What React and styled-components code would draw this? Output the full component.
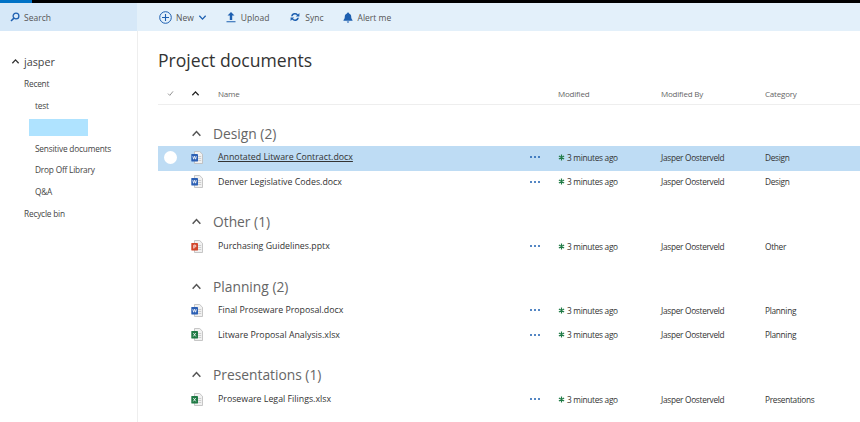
import React from 'react';
import styled, { createGlobalStyle } from 'styled-components';

const Global = createGlobalStyle`
  html, body { margin: 0; padding: 0; background: #fff; overflow: hidden; }
  body { font-family: 'Open Sans', 'Noto Sans', sans-serif; color: #333; }
  * { box-sizing: border-box; }
`;

const Page = styled.div`
  width: 860px;
  height: 422px;
  overflow: hidden;
  display: flex;
  flex-direction: column;
`;

const Suite = styled.div`
  height: 3px;
  background: #000;
  flex: none;
  &::before { content: ''; display: block; width: 32px; height: 3px; background: #0072c6; }
`;

const TopRow = styled.div`
  height: 28px;
  flex: none;
  display: flex;
  background: #e3f0fa;
`;

const SearchBox = styled.div`
  width: 137px;
  background: #d6e8f8;
  display: flex;
  align-items: center;
  gap: 4px;
  padding-left: 10px;
  font-size: 8.5px;
  color: #555;
`;

const Commands = styled.div`
  display: flex;
  align-items: center;
  padding-left: 22px;
`;

const Command = styled.div`
  display: flex;
  align-items: center;
  gap: ${(p) => p.$inner}px;
  font-size: 8.5px;
  color: #555;
  margin-right: ${(p) => p.$gap}px;
`;

const Body = styled.div`
  flex: 1;
  display: flex;
  min-height: 0;
`;

const Nav = styled.div`
  width: 138px;
  flex: none;
  border-right: 1px solid #eee;
  padding-top: 20px;
`;

const SiteTitle = styled.div`
  display: flex;
  align-items: center;
  gap: 4px;
  padding-left: 11px;
  height: 20px;
  font-size: 10.8px;
  color: #444;
  margin-bottom: 2px;
`;

const NavItem = styled.div`
  height: 21.6px;
  line-height: 21.6px;
  font-size: 8.3px;
  letter-spacing: -0.2px;
  color: #444;
  padding-left: ${(p) => (p.$sub ? 35 : 24)}px;
`;

const Redacted = styled.div`
  width: 59px;
  height: 17px;
  margin: 3px 0 1.6px 29px;
  background: #afe3ff;
`;

const Main = styled.div`
  flex: 1;
  padding-left: 20px;
  min-width: 0;
`;

const Title = styled.h1`
  margin: 0;
  height: 47px;
  padding-top: 14px;
  font-size: 17.6px;
  line-height: 30px;
  font-weight: 400;
  color: #333;
`;

const columns = `
  display: grid;
  grid-template-columns: 31px 29px 310px 30px 103px 104px 1fr;
  align-items: center;
`;

const HeadRow = styled.div`
  ${columns}
  height: 27px;
  padding-top: 4px;
  border-bottom: 1px solid #eee;
  font-size: 8px;
  letter-spacing: -0.2px;
  color: #666;
`;

const Row = styled.div`
  ${columns}
  height: 24.5px;
  padding-bottom: 2px;
  font-size: 8.3px;
  letter-spacing: -0.3px;
  color: #333;
  background: ${(p) => (p.$selected ? '#bedcf4' : 'transparent')};
`;

const Group = styled.div`
  display: flex;
  align-items: center;
  height: 25px;
  margin-top: ${(p) => p.$top}px;
  padding: 0 0 1px 33px;
  gap: 11px;
  font-size: 13.8px;
  color: #666;
`;

const FileName = styled.span`
  font-size: 8.8px;
  letter-spacing: 0;
  text-decoration: ${(p) => (p.$selected ? 'underline' : 'none')};
  white-space: nowrap;
`;

const HeadIcon = styled.span`
  display: flex;
  justify-content: ${(p) => (p.$start ? 'flex-start' : 'center')};
  padding-left: ${(p) => (p.$start ? 2 : 0)}px;
  padding-right: ${(p) => (p.$start ? 0 : 6)}px;
`;

const IconCell = styled.span`
  display: flex;
  padding-left: 2px;
`;

const Radio = styled.span`
  display: block;
  width: 13px;
  height: 13px;
  margin-left: 6px;
  border-radius: 50%;
  background: #fff;
`;

const Dots = styled.span`
  display: flex;
  gap: 2px;
  padding-left: 2px;
  & > i { width: 2px; height: 2px; border-radius: 50%; background: #1d5fb0; }
`;

const When = styled.span`
  display: flex;
  align-items: center;
  gap: 2px;
  white-space: nowrap;
`;

const ChevronSvg = styled.svg`
  flex: none;
  transform: ${(p) => (p.$down ? 'rotate(180deg)' : 'none')};
`;

const Chevron = ({ size = 9, color = '#555', down }) => (
  <ChevronSvg width={size} height={size} viewBox="0 0 10 10" $down={down}>
    <path d="M1.5 7 5 3.2 8.5 7" fill="none" stroke={color} strokeWidth="1.4" />
  </ChevronSvg>
);

const FileIcon = ({ color, letter }) => (
  <svg width="12" height="13" viewBox="0 0 12 13">
    <path d="M3.5.5h5.2l2.8 2.8v9.2h-8z" fill="#f1f1f1" stroke="#b9b9b9" strokeWidth=".8" />
    <path d="M7.2 5.5h3M7.2 7.5h3M7.2 9.5h3" stroke="#c8c8c8" strokeWidth=".9" />
    <rect x=".3" y="3" width="6.7" height="7.4" rx=".4" fill={color} />
    <path d={letter} fill="none" stroke="#fff" strokeWidth=".8" />
  </svg>
);

const glyphs = {
  word: { color: '#2b5fb4', letter: 'M1.8 5.2l.8 3 1-3 1 3 .8-3' },
  excel: { color: '#1f7a45', letter: 'M2.3 5l2.5 3.4M4.8 5l-2.5 3.4' },
  ppt: { color: '#d2452a', letter: 'M2.8 8.6V5.1h1.2a.9.9 0 0 1 0 1.9H2.8' },
};

const groups = [
  { name: 'Design (2)', top: 16, rows: [
    { file: 'Annotated Litware Contract.docx', type: 'word', cat: 'Design', selected: true },
    { file: 'Denver Legislative Codes.docx', type: 'word', cat: 'Design' },
  ] },
  { name: 'Other (1)', top: 14.75, rows: [
    { file: 'Purchasing Guidelines.pptx', type: 'ppt', cat: 'Other' },
  ] },
  { name: 'Planning (2)', top: 14.75, rows: [
    { file: 'Final Proseware Proposal.docx', type: 'word', cat: 'Planning' },
    { file: 'Litware Proposal Analysis.xlsx', type: 'excel', cat: 'Planning' },
  ] },
  { name: 'Presentations (1)', top: 14.75, rows: [
    { file: 'Proseware Legal Filings.xlsx', type: 'excel', cat: 'Presentations' },
  ] },
];

export default function App() {
  return (
    <Page>
      <Global />
      <Suite />
      <TopRow>
        <SearchBox>
          <svg width="10" height="10" viewBox="0 0 10 10">
            <circle cx="6" cy="4" r="2.9" fill="none" stroke="#1d5fb0" strokeWidth="1.3" />
            <path d="M3.9 6.1 1 9" stroke="#1d5fb0" strokeWidth="1.5" />
          </svg>
          Search
        </SearchBox>
        <Commands>
          <Command $gap={19} $inner={4}>
            <svg width="13" height="13" viewBox="0 0 13 13">
              <circle cx="6.5" cy="6.5" r="5.8" fill="none" stroke="#1d5fb0" strokeWidth="1" />
              <path d="M6.5 3v7M3 6.5h7" stroke="#1d5fb0" strokeWidth="1.1" />
            </svg>
            New
            <Chevron size={9} color="#1d5fb0" down />
          </Command>
          <Command $gap={21} $inner={5}>
            <svg width="10" height="12" viewBox="0 0 10 12">
              <path d="M5 1 1.5 4.6h2.3V9h2.4V4.6h2.3zM.5 10.2h9v1.1h-9z" fill="#1d5fb0" />
            </svg>
            Upload
          </Command>
          <Command $gap={19} $inner={5}>
            <svg width="10" height="10" viewBox="0 0 10 10">
              <path d="M1 4.2A4 4 0 0 1 8 2.4L9.4 1v3.6H5.8l1.2-1.2a2.6 2.6 0 0 0-4.4.8zM9 5.8A4 4 0 0 1 2 7.6L.6 9V5.4h3.6L3 6.6a2.6 2.6 0 0 0 4.4-.8z" fill="#1d5fb0" />
            </svg>
            Sync
          </Command>
          <Command $gap={0} $inner={5}>
            <svg width="10" height="11" viewBox="0 0 10 11">
              <path d="M5 .5c.6 0 1 .4 1 .9 1.5.4 2.2 1.6 2.2 3.1 0 1.9.6 2.8 1.3 3.5v.7H.5v-.7c.7-.7 1.3-1.6 1.3-3.5 0-1.5.7-2.7 2.2-3.1 0-.5.4-.9 1-.9zM3.8 9.4h2.4a1.2 1.2 0 0 1-2.4 0z" fill="#1d5fb0" />
            </svg>
            Alert me
          </Command>
        </Commands>
      </TopRow>
      <Body>
        <Nav>
          <SiteTitle>
            <Chevron size={9} color="#333" />
            jasper
          </SiteTitle>
          <NavItem>Recent</NavItem>
          <NavItem $sub>test</NavItem>
          <Redacted />
          <NavItem $sub>Sensitive documents</NavItem>
          <NavItem $sub>Drop Off Library</NavItem>
          <NavItem $sub>Q&amp;A</NavItem>
          <NavItem>Recycle bin</NavItem>
        </Nav>
        <Main>
          <Title>Project documents</Title>
          <HeadRow>
            <HeadIcon>
              <svg width="7" height="7" viewBox="0 0 7 7">
                <path d="M1 3.6 2.8 5.4 6 1.4" fill="none" stroke="#888" strokeWidth=".9" />
              </svg>
            </HeadIcon>
            <HeadIcon $start>
              <Chevron size={9} color="#222" />
            </HeadIcon>
            <span>Name</span>
            <span />
            <span>Modified</span>
            <span>Modified By</span>
            <span>Category</span>
          </HeadRow>
          {groups.map((g) => (
            <React.Fragment key={g.name}>
              <Group $top={g.top}>
                <Chevron size={11} color="#555" />
                {g.name}
              </Group>
              {g.rows.map((r) => (
                <Row key={r.file} $selected={r.selected}>
                  <span>{r.selected && <Radio />}</span>
                  <IconCell><FileIcon {...glyphs[r.type]} /></IconCell>
                  <FileName $selected={r.selected}>{r.file}</FileName>
                  <Dots><i /><i /><i /></Dots>
                  <When>
                    <svg width="7" height="7" viewBox="0 0 7 7">
                      <path d="M3.5.5v6M.9 2 6.1 5M.9 5 6.1 2" stroke="#1f7a45" strokeWidth="1.2" />
                    </svg>
                    3 minutes ago
                  </When>
                  <span>Jasper Oosterveld</span>
                  <span>{r.cat}</span>
                </Row>
              ))}
            </React.Fragment>
          ))}
        </Main>
      </Body>
    </Page>
  );
}
